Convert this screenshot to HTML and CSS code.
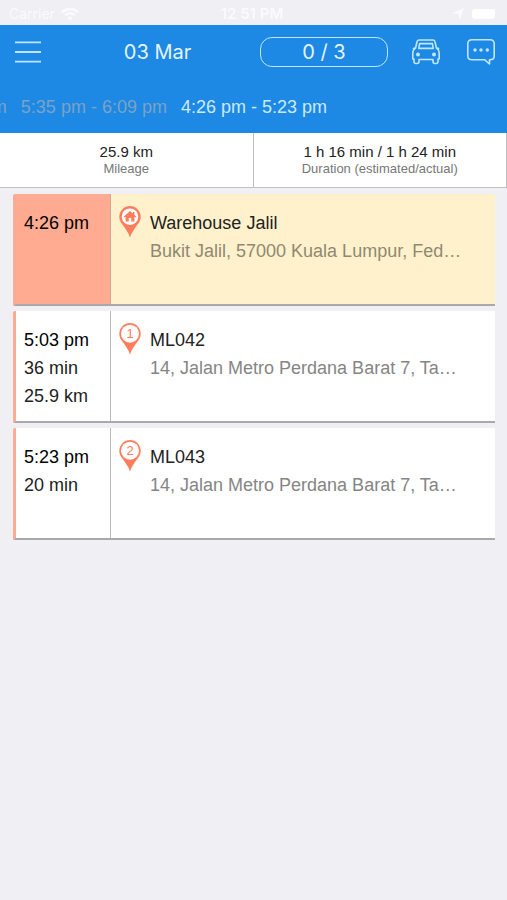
FILE: index.html
```html
<!DOCTYPE html>
<html lang="en">
<head>
<meta charset="utf-8">
<meta name="viewport" content="width=device-width, initial-scale=1">
<title>03 Mar</title>
<link rel="stylesheet" href="styles.css">
</head>
<body>
<div class="status">
  <div class="status-left">
    <span>Carrier</span>
    <svg width="18" height="14" viewBox="0 0 18 14" fill="none" stroke="currentColor" stroke-width="2.6"><path d="M1 5.2c4.600-4.200 11.400-4.200 16 0M4 8.400c3-2.700 7-2.700 10 0"/><path d="M9 13.500L6.200 10.800c1.600-1.400 4-1.400 5.600 0z" fill="currentColor" stroke="none"/></svg>
  </div>
  <span class="clock">12 51 PM</span>
  <div class="status-right">
    <svg width="12" height="12" viewBox="0 0 12 12" fill="currentColor"><path d="M12 0L7.500 12 6.500 6 0 5z"/></svg>
    <span class="battery"></span>
  </div>
</div>
<header class="header">
  <div class="toolbar">
    <button class="icon-button menu" aria-label="Menu">
      <svg width="26" height="22" viewBox="0 0 26 22" fill="none" stroke="currentColor" stroke-width="1.800"><path d="M0 1.300h26M0 11h26M0 20.700h26"/></svg>
    </button>
    <h1 class="date">03 Mar</h1>
    <button class="counter">0 / 3</button>
    <button class="icon-button car" aria-label="Vehicle">
      <svg width="28" height="26" viewBox="0 0 28 26" fill="none" stroke="currentColor" stroke-width="1.600" stroke-linejoin="round"><path d="M3.500 9.200L5 2.800Q5.400 1 7.200 1H20.800Q22.600 1 23 2.800L24.500 9.200Q27.200 11 27.200 14V20H26V22.500Q26 24.500 24 24.500H23Q21 24.500 21 22.500V20.500H7V22.500Q7 24.500 5 24.500H4Q2 24.500 2 22.500V20H.8V14Q.8 11 3.500 9.200zM3.500 8.800L.8 9.800M24.500 8.800L27.200 9.800"/><path d="M7.600 4.600H20.400L21.200 9.400H6.800z"/><g fill="currentColor" stroke="none"><circle cx="6" cy="15.500" r="2"/><circle cx="22" cy="15.500" r="2"/></g></svg>
    </button>
    <button class="icon-button chat" aria-label="Messages">
      <svg width="28" height="26" viewBox="0 0 28 26" fill="none" stroke="currentColor" stroke-width="1.600" stroke-linejoin="round"><path d="M5 .8H23Q27.200.8 27.200 5V17Q27.200 20.800 23 20.800H22.500V25L17.800 20.800H5Q.8 20.800.8 17V5Q.8.8 5 .8z"/><g fill="currentColor" stroke="none"><circle cx="8" cy="11" r="1.700"/><circle cx="14" cy="11" r="1.700"/><circle cx="20.300" cy="11" r="1.700"/></g></svg>
    </button>
  </div>
  <nav class="slots">
    <a class="slot" href="#">4:58 pm - 5:30 pm</a>
    <a class="slot" href="#">5:35 pm - 6:09 pm</a>
    <a class="slot active" href="#">4:26 pm - 5:23 pm</a>
  </nav>
</header>
<section class="summary">
  <div class="stat"><div class="value">25.9 km</div><div class="label">Mileage</div></div>
  <div class="stat"><div class="value">1 h 16 min / 1 h 24 min</div><div class="label">Duration (estimated/actual)</div></div>
</section>
<main class="stops">
  <article class="stop start">
    <div class="times"><div class="time">4:26 pm</div></div>
    <svg class="pin" width="22" height="32" viewBox="0 0 22 32"><path class="pin-body" d="M11 0a10.700 10.700 0 0 0-10.700 10.700c0 3 1.200 5.300 2.700 7.300 3 4 6.500 8.500 8 13.500 1.500-5 5-9.500 8-13.500 1.500-2 2.700-4.300 2.700-7.300A10.700 10.700 0 0 0 11 0z"/><circle class="pin-face" cx="11" cy="10.700" r="8.300"/><path class="pin-body" d="M11 5L4.800 10.600l.8.900 1-.8V15.500h3.200V12h2.400v3.500h3.200V10.700l1 .8.800-.9-1.800-1.600V6h-1.600v1.400z"/></svg>
    <div class="place"><h2 class="name">Warehouse Jalil</h2><p class="address">Bukit Jalil, 57000 Kuala Lumpur, Fed…</p></div>
  </article>
  <article class="stop">
    <div class="times"><div class="time">5:03 pm</div><div>36 min</div><div>25.9 km</div></div>
    <svg class="pin" width="22" height="32" viewBox="0 0 22 32"><path class="pin-body" d="M11 0a10.700 10.700 0 0 0-10.700 10.700c0 3 1.200 5.300 2.700 7.300 3 4 6.500 8.500 8 13.500 1.500-5 5-9.500 8-13.500 1.500-2 2.700-4.300 2.700-7.300A10.700 10.700 0 0 0 11 0z"/><circle class="pin-face" cx="11" cy="10.700" r="9"/><text class="pin-number" x="11" y="15">1</text></svg>
    <div class="place"><h2 class="name">ML042</h2><p class="address">14, Jalan Metro Perdana Barat 7, Ta…</p></div>
  </article>
  <article class="stop">
    <div class="times"><div class="time">5:23 pm</div><div>20 min</div></div>
    <svg class="pin" width="22" height="32" viewBox="0 0 22 32"><path class="pin-body" d="M11 0a10.700 10.700 0 0 0-10.700 10.700c0 3 1.200 5.300 2.700 7.300 3 4 6.500 8.500 8 13.500 1.500-5 5-9.500 8-13.500 1.500-2 2.700-4.300 2.700-7.300A10.700 10.700 0 0 0 11 0z"/><circle class="pin-face" cx="11" cy="10.700" r="9"/><text class="pin-number" x="11" y="15">2</text></svg>
    <div class="place"><h2 class="name">ML043</h2><p class="address">14, Jalan Metro Perdana Barat 7, Ta…</p></div>
  </article>
</main>
</body>
</html>
```
FILE: styles.css
```css
* { box-sizing: border-box; }

body {
  margin: 0;
  background: #efeff4;
  color: #222;
  font-family: "Liberation Sans", Arial, sans-serif;
  font-size: 18px;
}

h1, h2, p { margin: 0; font-weight: 400; }

.status {
  display: grid;
  grid-template-columns: 1fr auto 1fr;
  align-items: center;
  height: 25px;
  padding: 2px 12px 0 9px;
  color: #fbfbfd;
  font-family: Inter, sans-serif;
  font-size: 14px;
}

.status-left, .status-right { display: flex; align-items: center; gap: 6px; }
.status-right { justify-content: flex-end; gap: 8px; }
.clock { font-size: 15px; font-weight: 600; }
.battery { width: 23px; height: 10px; border-radius: 3px; background: #fff; }

.header { background: #1e88e5; color: #e3f4ff; }

.toolbar {
  display: flex;
  align-items: center;
  height: 54px;
  padding: 0 12px 0 15px;
}

.icon-button {
  display: flex;
  flex: none;
  padding: 0;
  border: 0;
  background: none;
  color: #bfe6ff;
}

.date {
  flex: 1;
  text-align: center;
  color: #e3f4ff;
  font-family: Inter, sans-serif;
  font-size: 20px;
}

.menu { margin-right: 32px; }

.counter {
  flex: none;
  width: 128px;
  height: 30px;
  margin: 0 24px 0 18px;
  padding: 0;
  border: 1px solid #bfe6ff;
  border-radius: 12px;
  background: none;
  color: #e3f4ff;
  font-family: Inter, sans-serif;
  font-size: 20px;
}

.chat { margin-left: 27px; }

.slots {
  display: flex;
  justify-content: flex-end;
  gap: 14px;
  height: 54px;
  padding-right: 180px;
  overflow: hidden;
  line-height: 56px;
}

.slot {
  flex: none;
  color: #7ba3c4;
  text-decoration: none;
  font-size: 18px;
  white-space: nowrap;
}

.slot.active { color: #c9ebff; }

.summary {
  display: grid;
  grid-template-columns: 1fr 1fr;
  border-bottom: 1px solid #c0c0c2;
  background: #fff;
}

.stat {
  padding: 10px 0;
  border-right: 1px solid #c0c0c2;
  text-align: center;
}

.value { font-size: 15px; line-height: 18px; }
.label { color: #777; font-size: 13px; line-height: 16px; }

.stops {
  display: flex;
  flex-direction: column;
  gap: 5px;
  padding: 6px 12px 6px 13px;
}

.stop {
  display: flex;
  align-items: stretch;
  min-height: 112px;
  border-bottom: 2px solid #a9a9ac;
  border-left: 3px solid #ffab91;
  border-radius: 2px 0 0 2px;
  background: #fff;
  line-height: 28px;
}

.times {
  flex: none;
  width: 95px;
  padding: 15px 0 0 8px;
  border-right: 1px solid #b8b8b8;
}

.time { color: #000; }
.start { background: #fff1cc; }
.start .times { background: #ffab91; border-right-color: #c9a999; }

.pin { flex: none; margin: 12px 9px 0 8px; }
.pin-body { fill: #ff7d5c; }
.pin-face { fill: #fff; }
.pin-number { fill: #ff7d5c; font-size: 13px; text-anchor: middle; }

.place { flex: 1; min-width: 0; padding-top: 15px; }
.name { font-size: 18px; }
.address {
  overflow: hidden;
  color: #858585;
  font-size: 18px;
  text-overflow: ellipsis;
  white-space: nowrap;
}
.start .address { color: #8f8972; }
```
